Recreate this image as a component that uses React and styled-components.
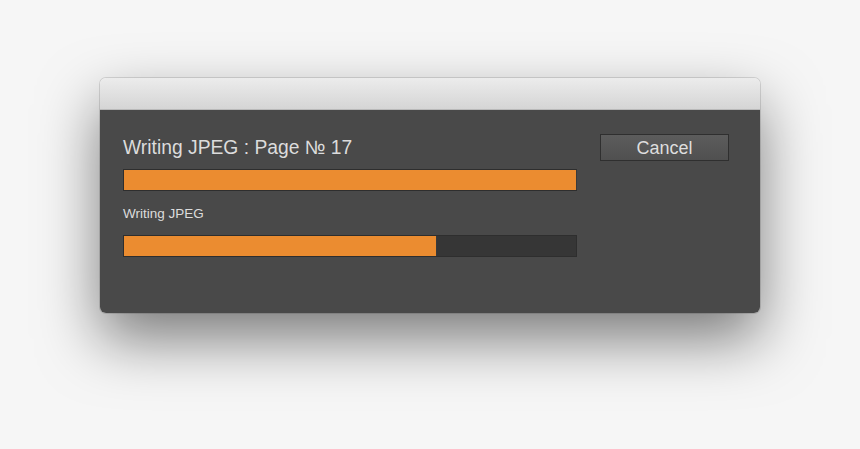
import React from "react";
import styled, { createGlobalStyle } from "styled-components";

const Global = createGlobalStyle`
  html, body { margin: 0; padding: 0; background: #f6f6f6; }
  body { font-family: "Liberation Sans", Arial, sans-serif; }
`;

const Page = styled.div`
  width: 860px;
  height: 449px;
  display: flex;
  justify-content: flex-start;
  align-items: flex-start;
  padding: 78px 0 0 100px;
  box-sizing: border-box;
  overflow: hidden;
`;

const Window = styled.div`
  width: 660px;
  height: 235px;
  border-radius: 6px;
  overflow: hidden;
  display: flex;
  flex-direction: column;
  box-shadow: 0 26px 60px rgba(0, 0, 0, 0.5), 0 0 0 1px rgba(0, 0, 0, 0.12);
`;

const TitleBar = styled.div`
  height: 32px;
  flex: none;
  background: linear-gradient(#ececec, #d5d5d5);
  border-bottom: 1px solid #b9b9b9;
  box-sizing: border-box;
`;

const Body = styled.div`
  flex: 1;
  background: #494949;
  display: flex;
  padding: 24px 31px 0 23px;
  gap: 23px;
`;

const Column = styled.div`
  width: 454px;
  display: flex;
  flex-direction: column;
`;

const Heading = styled.div`
  color: #dcdcdc;
  font-size: 19.3px;
  line-height: 28px;
  margin-bottom: 7px;
`;

const Label = styled.div`
  color: #dcdcdc;
  font-size: 13.5px;
  line-height: 16px;
  margin: 15px 0 13px;
`;

const Track = styled.div`
  height: 22px;
  box-sizing: border-box;
  border: 1px solid #2e2e2e;
  background: #363636;
  display: flex;
`;

const Fill = styled.div`
  background: #eb8c30;
  height: 100%;
  box-shadow: 1px 0 0 #3a3a3a;
`;

const CancelButton = styled.button`
  width: 129px;
  height: 27px;
  box-sizing: border-box;
  border: 1px solid #2f2f2f;
  background: linear-gradient(#5c5c5c, #505050);
  color: #dedede;
  font-family: "Liberation Sans", Arial, sans-serif;
  font-size: 18px;
  padding: 0;
  line-height: 26px;
`;

function Bar({ value }) {
  return (
    <Track>
      <Fill style={{ width: `${value * 100}%` }} />
    </Track>
  );
}

export default function App() {
  return (
    <>
      <Global />
      <Page>
        <Window>
          <TitleBar />
          <Body>
            <Column>
              <Heading>Writing JPEG : Page № 17</Heading>
              <Bar value={1} />
              <Label>Writing JPEG</Label>
              <Bar value={0.69} />
            </Column>
            <CancelButton>Cancel</CancelButton>
          </Body>
        </Window>
      </Page>
    </>
  );
}
